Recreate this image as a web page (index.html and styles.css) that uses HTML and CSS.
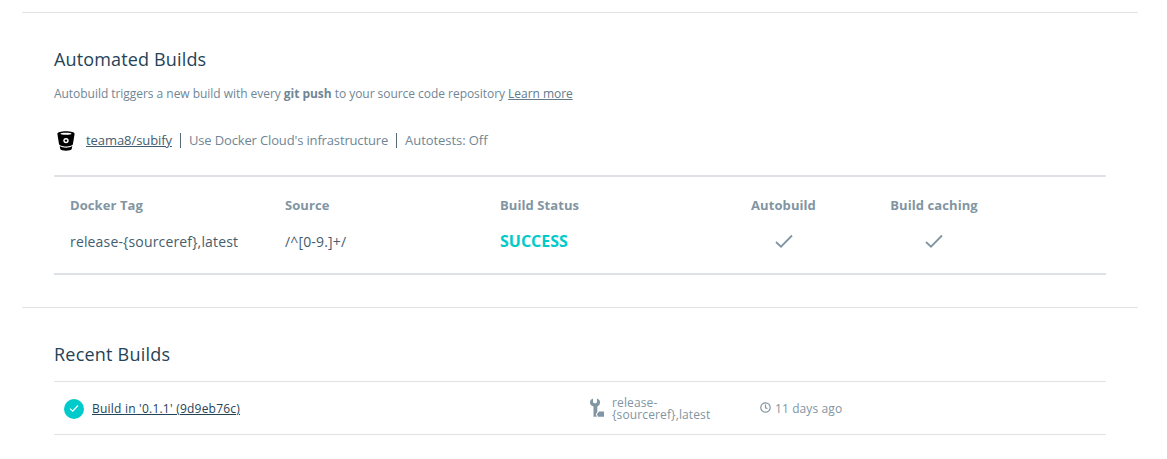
FILE: index.html
```html
<!DOCTYPE html>
<html lang="en">
<head>
<meta charset="utf-8">
<title>Builds</title>
<link rel="stylesheet" href="styles.css">
</head>
<body>
<main class="page">
  <section class="section automated">
    <h2 class="title">Automated Builds</h2>
    <p class="intro">Autobuild triggers a new build with every <b>git push</b> to your source code repository <a class="more">Learn more</a></p>
    <div class="repo">
      <svg class="bucket" width="18" height="20" viewBox="0 0 18 20"><path fill="#000" fill-rule="evenodd" d="M9 .3C4 .3.4 1.300.4 2.800c0 .5 1.200 7.700 1.700 10.400C2.400 14.300 5.300 15.500 9 15.500s6.600-1.200 6.900-2.300c.5-2.700 1.700-9.900 1.700-10.400C17.600 1.300 14 .3 9 .3zM9 1.800c3.300 0 5.500.4 5.500 1S12.300 3.800 9 3.800s-5.500-.4-5.500-1 2.200-1 5.500-1zM9 6.900a2.700 2.700 0 1 1 0 5.400 2.700 2.700 0 0 1 0-5.400z"/><circle cx="9" cy="9.600" r="1.200"/><path d="M2.700 15c3.400 2.200 9.200 2.200 12.600 0l-.6 3c-.3 2.200-11.100 2.200-11.400 0z"/></svg>
      <a class="repo-link">teama8/subify</a><i class="bar"></i><span class="infra">Use Docker Cloud's infrastructure</span><i class="bar"></i><span class="tests">Autotests: Off</span>
    </div>
    <div class="table">
      <div class="row head"><span>Docker Tag</span><span>Source</span><span>Build Status</span><span class="center">Autobuild</span><span class="center">Build caching</span></div>
      <div class="row data"><span class="value">release-{sourceref},latest</span><span class="value">/^[0-9.]+/</span><span class="success">SUCCESS</span>
        <span class="center"><svg class="check" width="18" height="14" viewBox="0 0 18 14"><path d="M1 8l5 4.700L17 1.500"/></svg></span>
        <span class="center"><svg class="check" width="18" height="14" viewBox="0 0 18 14"><path d="M1 8l5 4.700L17 1.500"/></svg></span></div>
    </div>
  </section>
  <section class="section recent">
    <h2 class="title">Recent Builds</h2>
    <div class="build">
      <svg class="ok" width="20" height="20" viewBox="0 0 20 20"><circle cx="10" cy="10" r="10" fill="#00cbca"/><path d="M6 9.600l2.700 2.600 5.300-5.700" fill="none" stroke="#fff" stroke-width="1.200"/></svg>
      <a class="build-link">Build in '0.1.1' (9d9eb76c)</a>
      <svg class="wrench" width="15" height="20" viewBox="0 0 15 20" fill="#8195a2"><path d="M3 .5v4l2 1 2-1v-4c2 .8 3 2 3 3.900S9 7.500 7.300 8.500v5.700L5.800 16l1 2.800H3.500V8.500C1 7.500 0 6.300 0 4.400S1 1.300 3 .5z"/><path d="M9 13.500h5v5.300H8L6.900 16.300z"/></svg>
      <span class="tag">release-<br>{sourceref},latest</span>
      <svg class="clock" width="11" height="11" viewBox="0 0 11 11" fill="none" stroke="#8195a2" stroke-width="1.200"><circle cx="5.500" cy="5.500" r="4.700"/><path d="M5.500 2.500v3.300l2 .7"/></svg>
      <span class="time">11 days ago</span>
    </div>
  </section>
</main>
</body>
</html>
```
FILE: styles.css
```css
* { box-sizing: border-box; }
body { margin: 0; background: #fff; color: #8195a2; font: 13px/18px "Open Sans", sans-serif; }
.page { height: 459px; padding: 12px 29px 0 22px; overflow: hidden; }
.section { height: 295px; border-top: 1px solid #e0e2e4; padding: 33px 32px 0; }
.title { margin: 0; font-size: 18px; line-height: 26px; font-weight: 400; letter-spacing: .15px; color: #254356; }
.recent .title { letter-spacing: .22px; }
.intro { margin: 13px 0 0; font-size: 12px; line-height: 18px; letter-spacing: -.04px; color: #708696; }
a { text-decoration: underline; color: #445d6e; }
.intro .more { color: #637b8b; }
.repo { display: flex; align-items: center; height: 20px; margin-top: 27px; color: #708696; }
.bucket { margin: 2px 11px 0 3px; }
.repo-link { letter-spacing: -.07px; }
.infra { letter-spacing: -.15px; }
.tests { letter-spacing: -.06px; }
.bar { width: 1px; height: 15px; margin: 0 8px; background: #556b7a; }
.table { margin-top: 25px; height: 100px; border-top: 2px solid #dee2e6; border-bottom: 2px solid #dee2e6; padding: 18px 16px 0; }
.row { display: grid; grid-template-columns: 215px 215px 215px 137px 164px; align-items: center; }
.head { font-weight: 700; height: 20px; letter-spacing: .08px; }
.data { height: 24px; margin-top: 14px; font-size: 14px; letter-spacing: .16px; color: #445d6e; }
.value { padding-top: 2px; }
.center { text-align: center; }
.data .center { display: flex; justify-content: center; }
.data .success { color: #00cbca; font-size: 16px; font-weight: 700; letter-spacing: 0; }
.check { fill: none; stroke: #8195a2; stroke-width: 1.8; }
.build { display: flex; align-items: center; height: 54px; margin-top: 14px; padding-left: 10px; border-top: 1px solid #e0e2e4; border-bottom: 1px solid #e0e2e4; }
.ok { margin-top: 1px; }
.build-link { width: 498px; margin: 1px 0 0 8px; font-size: 12px; letter-spacing: .22px; color: #254356; }
.tag { width: 148px; margin: 2px 0 0 7px; font-size: 12px; line-height: 12px; letter-spacing: .12px; }
.clock { margin-top: -2px; }
.time { margin: 2px 0 0 4px; font-size: 12px; letter-spacing: .1px; }
```
